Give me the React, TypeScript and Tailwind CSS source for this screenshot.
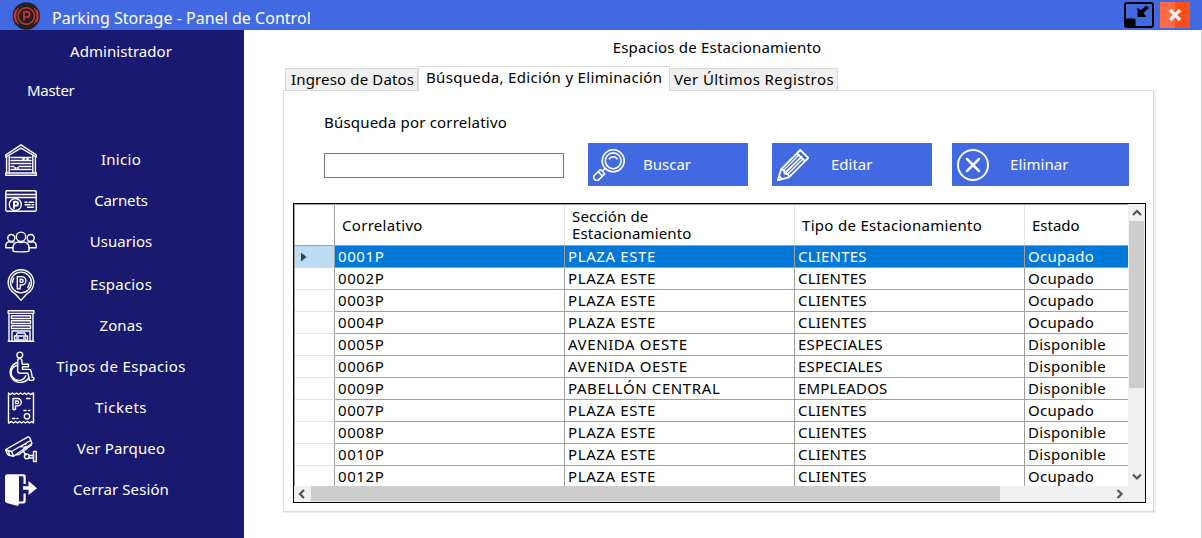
import type { ReactNode } from "react";

const Svg = ({ children, className = "size-8" }: { children: ReactNode; className?: string }) => (
  <svg
    viewBox="0 0 32 32"
    className={`${className} shrink-0`}
    fill="none"
    stroke="currentColor"
    strokeWidth="1.4"
    strokeLinecap="round"
    strokeLinejoin="round"
  >
    {children}
  </svg>
);

const GarageIcon = () => (
  <Svg>
    <path d="M.8 10.800 16 .8l15.200 10v2.200L16 4.200.8 13z" />
    <path d="M1.600 12.500V29M4.200 11.500V29M27.800 11.500V29M30.400 12.500V29M.6 29h30.800v2.300H.6z" />
    <path d="M6 13.500h20M6 16.500h20M6 19.500h20M6 22.500h3M14 22.500h12M6 25.500h20" />
    <path d="M18 15h1M22 15h1M10 24h.5M12.500 24h.5" strokeWidth="1.800" />
  </Svg>
);

const CardIcon = () => (
  <Svg>
    <rect x=".8" y="5.800" width="30.400" height="20.400" rx="1.300" />
    <path d="M1 9.500h30M1 12.500h30" />
    <circle cx="10.300" cy="19.500" r="6" />
    <path d="M9 23v-6.300h2a1.900 1.900 0 0 1 0 3.900H9" strokeWidth="1.900" />
    <path d="M20 17.200h2M24 17.200h4.500M20 19.800h5M27 19.800h1.500M22.500 22.300h6" />
  </Svg>
);

const UsersIcon = () => (
  <Svg>
    <circle cx="16" cy="10.800" r="4.700" />
    <path d="M8 25v-3.500c0-3.500 2.500-5 5-5.600 2 1 4 1 6 0 2.500.6 5 2.100 5 5.600V25c-1 1.200-15 1.200-16 0z" />
    <circle cx="6.300" cy="12" r="3.500" />
    <circle cx="25.700" cy="12" r="3.500" />
    <path d="M7.800 21.800H.8v-2c0-2.300 1.500-3.800 3.500-4.200 1.500.6 3 .6 5 .3M24.200 21.800h7v-2c0-2.300-1.500-3.800-3.500-4.200-1.500.6-3 .6-5 .3" />
  </Svg>
);

const PinIcon = () => (
  <Svg>
    <path d="M10.300 25C6 22.500 3.200 18.400 3.200 13.500a12.800 12.800 0 0 1 25.600 0c0 4.900-2.800 9-7.100 11.500L16 31.300z" />
    <circle cx="16" cy="13.500" r="10.400" />
    <path d="M12.300 19.800V7.600h4.400a4.200 4.200 0 0 1 0 8.400h-1.500v3.800zM15.200 10.200h1.300a1.600 1.600 0 0 1 0 3.200h-1.300z" />
    <path d="M7.500 13.500c0-1.500.5-3 1.300-4.200M24.500 13.500c0 2-.7 3.700-1.800 5" />
  </Svg>
);

const ZoneIcon = () => (
  <Svg>
    <path d="M3.200.8h25.600v2.600H3.200zM4 4v27.300M28 4v27.300M3.200 31.300h25.600" />
    <path d="M6.500 5.800h19v2.700h-19zM6.500 10.800h19v2.700h-19zM6.500 15.800h19v2.700h-19zM7 31V21h18v10" />
    <path d="M11 26l1.200-3h7.600l1.200 3M9.500 26h13v4h-13zM11.500 28h2M18.500 28h2" />
  </Svg>
);

const WheelchairIcon = () => (
  <Svg>
    <circle cx="14.800" cy="4" r="2.900" />
    <path d="M12.800 8.200c1.200-.9 3.200-.7 4 .6l.4 4.500h6.300v2.400h-6v2.700h6.500c1.300 0 2 .7 2.200 1.700l1 6.200 1.500.3c.8 1.200 0 2.700-1.200 2.800h-2.900l-1.700-7.200H15c-1.500 0-2.300-1-2.400-2.300z" />
    <path d="M12.300 11.500a10.200 10.200 0 1 0 11.500 15.500M12.500 14.300a7.600 7.600 0 1 0 8.300 10.500" />
  </Svg>
);

const TicketIcon = () => (
  <Svg>
    <path d="M3.500 1l2 1.500 2-1.500 2 1.500 2-1.500 2 1.500 2-1.500 2 1.500 2-1.500 2 1.500 2-1.500 2 1.500L28.500 1v30l-2-1.500-2 1.500-2-1.500-2 1.500-2-1.500-2 1.500-2-1.500-2 1.500-2-1.500-2 1.500-2-1.500L3.500 31z" />
    <path d="M8 17.500V6.500h4.500a3.700 3.700 0 0 1 0 7.400h-2v3.600zM10.500 9h1.800a1.300 1.300 0 0 1 0 2.600h-1.800z" />
    <path d="M21.500 6.500h3.500M19 18.500h2M23.500 18.500h1.500M7.500 26.500h2.500M12 26.500h1" />
    <circle cx="22" cy="24.300" r="2.700" />
  </Svg>
);

const CameraIcon = () => (
  <Svg>
    <path d="M.8 16.500 22.500 4.200c1-.5 2 0 2.400.8l2 5.500L8.500 23.300l-4.500-1c-1.500-.8-2.800-3.600-3.200-5.800z" />
    <path d="M1 17l5.500 1.500 19-11M6.500 18.500l2 4.500M3 18l1.500 3.500M26.500 12 14 21.500l-2.500.3" />
    <path d="M16 14l2-1.200M18.500 15l2.500-1.600M20 11.500l1.500-1" />
    <path d="M18.500 18.500l2.500 3.500M24 22.500h4.500M24 25h4.500" />
    <circle cx="21.800" cy="23.300" r="2.400" />
    <path d="M28.500 18.500h2.800v10h-2.800z" />
  </Svg>
);

const ExitIcon = () => (
  <Svg>
    <path d="M2.500.3h16.200a2 2 0 0 1 2 2V10h-2.200V3.800c0-1-.5-1.500-1.500-1.500h-3.500c.3.300.5.800.5 1.500v23.700H17c1 0 1.500-.5 1.500-1.500v-6.500h2.200v8a2 2 0 0 1-2 2H14c0 1.800-.8 2.500-2.200 2.200L1.800 29C.6 28.600 0 27.800 0 26.500V2.800C0 1.300.9.300 2.500.3z" fill="currentColor" stroke="none" />
    <path d="M18 12.200h5.500V7l8.500 7.200-8.500 6.800v-5.200H18z" fill="currentColor" stroke="none" />
  </Svg>
);

const SearchIcon = () => (
  <Svg className="h-8 w-8">
    <circle cx="20.200" cy="11.800" r="11" strokeWidth="1.600" />
    <circle cx="20.200" cy="11.800" r="7.900" strokeWidth="1.600" />
    <path d="M16.300 9.800c2-2.800 5.800-2.800 7.800 0M12 19.500l-2.200 2.200" strokeWidth="1.600" />
    <path d="M7.500 20.500l4.300 4.300-5.600 5.600a3 3 0 0 1-4.600-4.300zM5.200 22.800l4.300 4.300" strokeWidth="1.600" />
  </Svg>
);

const PencilIcon = () => (
  <Svg className="h-8 w-8">
    <path
      d="M.8 31.200 4 20.500 23.300 1l8 7.800-19.500 19.500zM4 20.500l3 .4.500 3.600 3.500.3.800 3.500M2.200 27l2.800 3M20 4.300l8 7.800M7.500 24.500 24.500 7.800"
      strokeWidth="1.800"
    />
    <path d="M7 20.900 22 6M11 24.800 26 10" strokeWidth="1.300" />
  </Svg>
);

const DeleteIcon = () => (
  <Svg className="h-8 w-8">
    <circle cx="16" cy="16" r="15" strokeWidth="2" />
    <path d="M10 10l12 12M22 10 10 22" strokeWidth="2.500" />
  </Svg>
);

const menu = [
  { label: "Inicio", icon: <GarageIcon />, box: "h-[41px] tracking-[0.3px]" },
  { label: "Carnets", icon: <CardIcon />, box: "h-[41px] tracking-[-0.1px]" },
  { label: "Usuarios", icon: <UsersIcon />, box: "h-[43px] tracking-[0.05px]" },
  { label: "Espacios", icon: <PinIcon />, box: "h-[41px] tracking-[0.2px]" },
  { label: "Zonas", icon: <ZoneIcon />, box: "h-[41px] tracking-[0.1px]" },
  { label: "Tipos de Espacios", icon: <WheelchairIcon />, box: "h-[41px] tracking-[0.35px]" },
  { label: "Tickets", icon: <TicketIcon />, box: "h-[41px] tracking-[0.5px]" },
  { label: "Ver Parqueo", icon: <CameraIcon />, box: "h-[41px] tracking-[0.15px]" },
  { label: "Cerrar Sesión", icon: <ExitIcon />, box: "h-[41px] tracking-[0.1px]" },
];

const rows = [
  ["0001P", "PLAZA ESTE", "CLIENTES", "Ocupado"],
  ["0002P", "PLAZA ESTE", "CLIENTES", "Ocupado"],
  ["0003P", "PLAZA ESTE", "CLIENTES", "Ocupado"],
  ["0004P", "PLAZA ESTE", "CLIENTES", "Ocupado"],
  ["0005P", "AVENIDA OESTE", "ESPECIALES", "Disponible"],
  ["0006P", "AVENIDA OESTE", "ESPECIALES", "Disponible"],
  ["0009P", "PABELLÓN CENTRAL", "EMPLEADOS", "Disponible"],
  ["0007P", "PLAZA ESTE", "CLIENTES", "Ocupado"],
  ["0008P", "PLAZA ESTE", "CLIENTES", "Disponible"],
  ["0010P", "PLAZA ESTE", "CLIENTES", "Disponible"],
  ["0012P", "PLAZA ESTE", "CLIENTES", "Ocupado"],
];

const Chevron = ({ d }: { d: string }) => (
  <svg viewBox="0 0 16 16" className="size-4 shrink-0" fill="none" stroke="#555" strokeWidth="2.200">
    <path d={d} />
  </svg>
);

const TitleBar = () => (
  <header className="flex h-[30px] shrink-0 bg-[#4169e1] text-white">
    <svg viewBox="0 0 28 28" className="mt-[2px] ml-[12px] size-7" fill="none" stroke="#cf3534" strokeWidth="1.400">
      <circle cx="14.300" cy="14" r="13.700" fill="#222" stroke="none" />
      <circle cx="14.300" cy="14" r="8.300" />
      <path d="M12 18.500v-8.700h3a2.500 2.500 0 0 1 0 5.200h-3" strokeWidth="1.700" />
      <path d="M6.500 6.200a11.500 11.500 0 0 0 0 15.600M4 8a12.500 12.500 0 0 0 0 12M22.100 6.200a11.500 11.500 0 0 1 0 15.600M24.600 8a12.500 12.500 0 0 1 0 12" strokeWidth="1.100" />
    </svg>
    <h1 className="ml-[12px] pt-[3px] text-base leading-[30px] tracking-[0.02px]">Parking Storage - Panel de Control</h1>
    <button className="mt-[2px] ml-auto h-[26px] w-[30px] text-black">
      <svg viewBox="0 0 30 26" className="h-[26px] w-[30px]">
        <rect x="1" y="1" width="28" height="24" rx="2" fill="none" stroke="currentColor" strokeWidth="2" />
        <path d="M1 16.500h9.500a1 1 0 0 1 1 1V25H2.500A1.500 1.500 0 0 1 1 23.500z" fill="currentColor" />
        <path d="M13.500 5.500l3 2.700L22.500 3.500l2.500 2.500-5.500 5 3 4H13.500z" fill="currentColor" />
      </svg>
    </button>
    <button className="mt-[2px] mr-[12px] ml-[6px] h-[26px] w-[30px]">
      <svg viewBox="0 0 30 26" className="h-[26px] w-[30px]">
        <path d="M0 0h15v26H0z" fill="#ff6b45" />
        <path d="M15 0h15v26H15z" fill="#ff4f18" />
        <path d="M10 8l10 10M20 8l-10 10" stroke="#f3f3f3" strokeWidth="3.200" />
      </svg>
    </button>
  </header>
);

const Action = ({ icon, label, box, text }: { icon: ReactNode; label: string; box: string; text: string }) => (
  <button className={`flex h-[43px] items-center bg-[#4169e1] pl-[5px] text-white ${box}`}>
    {icon}
    <span className={text}>{label}</span>
  </button>
);

const Grid = () => (
  <div className="mt-[17px] ml-[9px] flex h-[300px] w-[853px] flex-col border border-black bg-[#f0f0f0]">
    <div className="flex h-[282px]">
      <div className="h-[282px] w-[834px] overflow-hidden border-t border-l border-[#a0a0a0] bg-white">
        <div className="flex h-[41px] items-center border-b border-[#a0a0a0]">
          <div className="h-full w-[40px] border-r border-[#a0a0a0]" />
          <div className="flex h-full w-[230px] items-center border-r border-[#e5e5e5] pl-[7px] tracking-[0.3px]">Correlativo</div>
          <div className="flex h-full w-[230px] flex-col justify-center border-r border-[#e5e5e5] pl-[7px] leading-[17px] tracking-[0.15px]">
            <span>Sección de</span>
            <span>Estacionamiento</span>
          </div>
          <div className="flex h-full w-[230px] items-center border-r border-[#e5e5e5] pl-[7px] tracking-[0.3px]">Tipo de Estacionamiento</div>
          <div className="flex h-full items-center pl-[7px]">Estado</div>
        </div>
        {rows.map((row, i) => (
          <div key={row[0]} className={i === 0 ? "flex h-[22px] bg-[#0078d7] leading-[21px] text-white" : "flex h-[22px] leading-[21px]"}>
            <div
              className={
                i === 0
                  ? "flex w-[40px] items-center border-r border-r-[#a0a0a0] bg-[#bcdcf4] pl-[6px]"
                  : "w-[40px] border-r border-b border-r-[#a0a0a0] border-b-[#e5e5e5]"
              }
            >
              {i === 0 && (
                <svg viewBox="0 0 6 10" className="h-[10px] w-[6px]">
                  <path d="M0 .5 5.500 5 0 9.500z" fill="#404040" />
                </svg>
              )}
            </div>
            <div className="w-[230px] border-r border-b border-[#a0a0a0] pl-[3px] tracking-[0.6px]">{row[0]}</div>
            <div className="w-[230px] border-r border-b border-[#a0a0a0] pl-[3px] tracking-[0.6px]">{row[1]}</div>
            <div className="w-[230px] border-r border-b border-[#a0a0a0] pl-[3px] tracking-[0.2px]">{row[2]}</div>
            <div className="w-[103px] border-b border-[#a0a0a0] pl-[3px] tracking-[0.3px]">{row[3]}</div>
          </div>
        ))}
      </div>
      <div className="flex w-[17px] flex-col items-center">
        <div className="h-[17px] w-4"><Chevron d="M4 11 8 7l4 4" /></div>
        <div className="h-[167px] w-[15px] bg-[#cdcdcd]" />
        <div className="mt-auto h-[17px] w-4"><Chevron d="M4 5.500 8 9.500 12 5.500" /></div>
      </div>
    </div>
    <div className="flex h-4 pr-[17px]">
      <div className="w-[17px]"><Chevron d="M10 4 6 8l4 4" /></div>
      <div className="h-[15px] w-[689px] bg-[#cdcdcd]" />
      <div className="ml-auto w-[17px]"><Chevron d="M6.500 4l4 4-4 4" /></div>
    </div>
  </div>
);

export default function App() {
  return (
    <div className="flex h-[538px] w-[1202px] flex-col overflow-hidden bg-white font-['Noto_Sans',sans-serif] text-[15px] text-black">
      <TitleBar />
      <div className="flex min-h-0 flex-1">
        <aside className="w-[244px] bg-[#191970] text-white">
          <div className="pt-[6px] pr-[2px] text-center leading-[30px] tracking-[0.05px]">Administrador</div>
          <div className="mt-[9px] pl-[27px] leading-[30px] tracking-[-0.3px]">Master</div>
          <nav className="mt-[39px]">
            {menu.map(({ label, icon, box }) => (
              <a key={label} className={`flex pl-[5px] ${box}`}>
                {icon}
                <span className="w-[168px] text-center leading-[31px]">{label}</span>
              </a>
            ))}
          </nav>
        </aside>
        <main className="flex-1 border-r border-[#d4d4d4]">
          <h2 className="h-[36px] pt-[2px] pr-[11px] text-center leading-[30px] tracking-[0.2px]">Espacios de Estacionamiento</h2>
          <div className="flex h-[24px] items-end pl-[41px] whitespace-nowrap">
            <div className="h-[22px] w-[133px] border border-b-0 border-[#d9d9d9] bg-[#f0f0f0] pl-[5px] leading-[21px] tracking-[0.15px]">Ingreso de Datos</div>
            <div className="z-10 -mb-px h-[25px] w-[252px] border border-b-0 border-[#d9d9d9] bg-white pl-[7px] leading-[21px] tracking-[0.33px]">
              Búsqueda, Edición y Eliminación
            </div>
            <div className="h-[22px] w-[168px] border border-b-0 border-l-0 border-[#d9d9d9] bg-[#f0f0f0] pl-[4px] leading-[21px] tracking-[0.42px]">Ver Últimos Registros</div>
          </div>
          <div className="ml-[39px] h-[423px] w-[873px] border-r-2 border-b border-[#f0f0f0]">
            <div className="h-[422px] w-[871px] border border-[#d9d9d9]">
              <div className="mt-[16px] ml-[40px] leading-[30px] tracking-[0.2px]">Búsqueda por correlativo</div>
              <div className="mt-[6px] flex pl-[40px]">
                <input className="mt-[10px] h-[25px] w-[240px] border border-[#7a7a7a] px-1 outline-none" />
                <Action icon={<SearchIcon />} label="Buscar" box="ml-[24px] w-[160px]" text="ml-[18px]" />
                <Action icon={<PencilIcon />} label="Editar" box="ml-[24px] w-[160px]" text="ml-[22px]" />
                <Action icon={<DeleteIcon />} label="Eliminar" box="ml-[20px] w-[177px]" text="ml-[21px] tracking-[0.1px]" />
              </div>
              <Grid />
            </div>
          </div>
        </main>
      </div>
    </div>
  );
}
